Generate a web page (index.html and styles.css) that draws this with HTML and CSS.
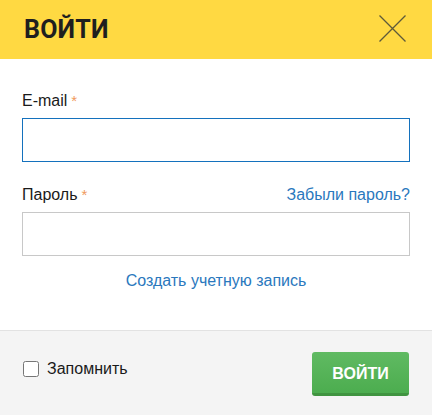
FILE: index.html
```html
<!DOCTYPE html>
<html lang="ru">
<head>
<meta charset="utf-8">
<title>Войти</title>
<link rel="stylesheet" href="styles.css">
</head>
<body>
<div class="modal">
  <div class="header">
    <h1 class="title">ВОЙТИ</h1>
    <button class="close" aria-label="Закрыть">
      <svg width="27" height="27" viewBox="0 0 27 27"><path d="M0.5 0.5 L26.5 26.5 M26.5 0.5 L0.5 26.5" stroke="#5e5a3a" stroke-width="1.3" fill="none"/></svg>
    </button>
  </div>
  <div class="content">
    <div class="field">
      <div class="label-row"><label class="label">E-mail<span class="req">*</span></label></div>
      <input class="input input-focus" type="text">
    </div>
    <div class="field field-second">
      <div class="label-row"><label class="label">Пароль<span class="req">*</span></label><a class="link" href="#">Забыли пароль?</a></div>
      <input class="input" type="password">
    </div>
    <div class="create"><a class="link" href="#">Создать учетную запись</a></div>
  </div>
  <div class="footer">
    <label class="remember"><input type="checkbox" class="check"><span>Запомнить</span></label>
    <button class="submit">ВОЙТИ</button>
  </div>
</div>
</body>
</html>
```
FILE: styles.css
```css
html, body {
  margin: 0;
  padding: 0;
  background: #fff;
}
body {
  font-family: "Liberation Sans", Arial, sans-serif;
  font-size: 16px;
  color: #222;
}
.modal {
  width: 432px;
  height: 415px;
  display: flex;
  flex-direction: column;
}
.header {
  height: 59px;
  background: #ffd942;
  display: flex;
  align-items: center;
  justify-content: space-between;
  padding: 0 26px 0 24px;
  box-sizing: border-box;
}
.title {
  margin: 0;
  font-family: Roboto, "Liberation Sans", sans-serif;
  font-weight: 700;
  font-size: 25px;
  line-height: 30px;
  color: #1f1f1f;
  letter-spacing: 0.2px;
}
.close {
  border: 0;
  background: none;
  padding: 0;
  width: 27px;
  height: 27px;
  display: block;
  margin-top: -3px;
}
.close svg { display: block; }
.content {
  padding: 32px 22px 0 22px;
  flex: 1;
}
.field-second {
  margin-top: 23px;
}
.label-row {
  display: flex;
  justify-content: space-between;
  align-items: baseline;
  line-height: 20px;
  margin-bottom: 7px;
}
.label {
  font-size: 16px;
  color: #1a1a1a;
}
.req {
  color: #f09a5c;
  margin-left: 4px;
  font-size: 15px;
}
.link {
  color: #2a78bd;
  text-decoration: none;
  font-size: 16px;
}
.input {
  display: block;
  width: 100%;
  height: 44px;
  box-sizing: border-box;
  border: 1px solid #c8c8c8;
  border-radius: 0;
  margin: 0;
  padding: 0 10px;
  font-size: 16px;
  outline: none;
  background: #fff;
}
.input-focus {
  border-color: #1471bd;
}
.create {
  text-align: center;
  line-height: 20px;
  margin-top: 15px;
}
.footer {
  height: 85px;
  box-sizing: border-box;
  border-top: 1px solid #e2e2e2;
  background: #f4f4f4;
  display: flex;
  justify-content: space-between;
  align-items: flex-start;
  padding: 21px 23px 0 23px;
}
.remember {
  display: flex;
  align-items: center;
  gap: 8px;
  margin-top: 7px;
  line-height: 20px;
  color: #1a1a1a;
}
.check {
  width: 16px;
  height: 16px;
  margin: 0;
}
.submit {
  width: 97px;
  height: 44px;
  border: 0;
  border-bottom: 3px solid #409440;
  border-radius: 3px;
  background: linear-gradient(#60ba62, #4cad4f);
  color: #fff;
  font-family: "Liberation Sans", Arial, sans-serif;
  font-weight: 700;
  font-size: 16px;
  padding: 2px 0 0 0;
  box-sizing: border-box;
}
```
